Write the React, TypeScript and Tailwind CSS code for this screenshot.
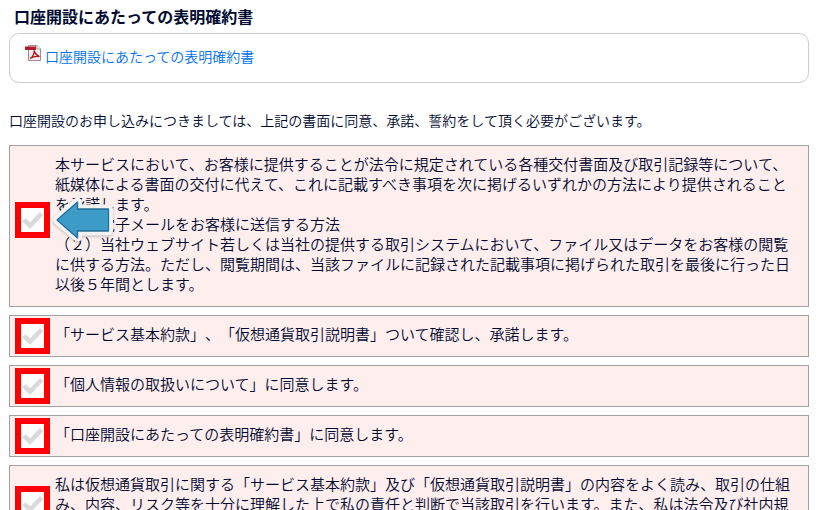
import React from 'react';

const agreements = [
  {
    checkClass: "mt-14",
    arrow: true,
    lines: [
      "本サービスにおいて、お客様に提供することが法令に規定されている各種交付書面及び取引記録等について、",
      "紙媒体による書面の交付に代えて、これに記載すべき事項を次に掲げるいずれかの方法により提供されること",
      "を承諾します。",
      "（１）電子メールをお客様に送信する方法",
      "（２）当社ウェブサイト若しくは当社の提供する取引システムにおいて、ファイル又はデータをお客様の閲覧",
      "に供する方法。ただし、閲覧期間は、当該ファイルに記録された記載事項に掲げられた取引を最後に行った日",
      "以後５年間とします。"
    ]
  },
  {
    checkClass: "mt-0.5",
    lines: ["「サービス基本約款」、「仮想通貨取引説明書」ついて確認し、承諾します。"]
  },
  {
    checkClass: "mt-0.5",
    lines: ["「個人情報の取扱いについて」に同意します。"]
  },
  {
    checkClass: "mt-0.5",
    lines: ["「口座開設にあたっての表明確約書」に同意します。"]
  },
  {
    checkClass: "mt-5",
    lines: [
      "私は仮想通貨取引に関する「サービス基本約款」及び「仮想通貨取引説明書」の内容をよく読み、取引の仕組",
      "み、内容、リスク等を十分に理解した上で私の責任と判断で当該取引を行います。また、私は法令及び社内規"
    ]
  }
];

const PdfIcon = () => (
  <svg className="mt-[11px] h-4 w-4 shrink-0" viewBox="0 0 16 16">
    <path d="M3.5.5h8.500l3.500 3.500v11.500h-12z" fill="#f5eeee" stroke="#a08c8c" />
    <path d="M12 .5v3.500h3.500" fill="#fff" stroke="#a08c8c" strokeWidth=".8" />
    <path d="M0 1.500h11V5H0z" fill="#b01c28" />
    <path d="M5 13.500c2.200-1 4.200-4 4.200-8 .6 3 2.200 4.800 5.300 6-3.200-.6-6.200-.1-9.500 2z" fill="none" stroke="#b5121b" strokeWidth="1.300" />
  </svg>
);

const CheckBox = ({ className }: { className: string }) => (
  <div className={`h-9 w-[35px] shrink-0 border-6 border-[#ff0000] bg-white ${className}`}>
    <svg className="h-6 w-[23px]" viewBox="0 0 23 24">
      <path d="M1.200 13.200l3.500-3 4.500 4L19 4l3.200 3.200L9 21z" fill="#dadada" />
    </svg>
  </div>
);

const Arrow = () => (
  <svg className="absolute left-[42px] top-[47px] h-[56px] w-[66px]" viewBox="0 0 66 56">
    <path
      d="M5 27L25.500 9v7H56.500v22H25.500v6z"
      className="drop-shadow-[0_1px_1px_rgba(0,0,0,0.25)]"
      fill="#f3f3f3"
      stroke="#f3f3f3"
      strokeWidth="9"
      strokeLinejoin="round"
    />
    <path
      d="M5 27L25.500 9v7H56.500v22H25.500v7z"
      fill="#3d9bc7"
      stroke="#236f9a"
      strokeWidth="1.300"
      strokeLinejoin="round"
    />
  </svg>
);

const App = () => {
  return (
    <div className="h-[510px] w-[820px] overflow-hidden bg-white pl-[9px] font-['Noto_Sans_CJK_JP',sans-serif] text-[#000a30] [text-spacing-trim:space-all]">
      <h1 className="h-[33px] pl-[5px] pt-1 text-base font-bold leading-6">
        口座開設にあたっての表明確約書
      </h1>

      <div className="flex h-[50px] w-[800px] rounded-[10px] border border-[#cccccc] pl-[15px]">
        <PdfIcon />
        <a href="#" className="ml-1 mt-3 text-sm font-[350] leading-5 text-[#0070f0]">
          口座開設にあたっての表明確約書
        </a>
      </div>

      <p className="mt-[27px] h-[35px] whitespace-nowrap text-sm font-[350] leading-5">
        口座開設のお申し込みにつきましては、上記の書面に同意、承諾、誓約をして頂く必要がございます。
      </p>

      <div className="flex w-[800px] flex-col gap-2">
        {agreements.map((item, index) => (
          <div key={index} className="relative flex border border-[#a0a0a0] bg-[#ffeeee] pl-[5px]">
            <CheckBox className={item.checkClass} />
            <div className="ml-[5px] pb-3 pt-2 text-[15px] font-[350] leading-5">
              {item.lines.map((line, i) => (
                <p key={i} className="whitespace-nowrap">{line}</p>
              ))}
            </div>
            {item.arrow && <Arrow />}
          </div>
        ))}
      </div>
    </div>
  );
};

export default App;
